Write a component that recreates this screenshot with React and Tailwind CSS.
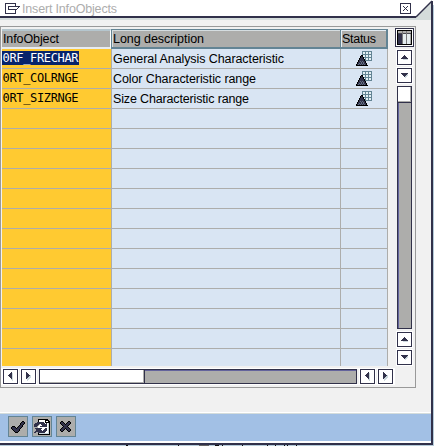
import React from "react";

const rows = [
  { name: "0RF_FRECHAR", description: "General Analysis Characteristic", width: 171 },
  { name: "0RT_COLRNGE", description: "Color Characteristic range", width: 143 },
  { name: "0RT_SIZRNGE", description: "Size Characteristic range", width: 136 },
];

const emptyRows = Array.from({ length: 13 });

const palette = {
  k: "#000000",
  n: "#31314a",
  g: "#adadab",
  w: "#ffffff",
  s: "#ccd8dd",
  m: "#637080",
};

// small bitmap icon, one character per pixel
const PixelIcon = ({ map, className }) => (
  <svg
    className={className}
    width={map[0].length}
    height={map.length}
    viewBox={`0 0 ${map[0].length} ${map.length}`}
    shapeRendering="crispEdges"
  >
    {map.map((line, y) =>
      line.split("").map((c, x) =>
        palette[c] ? <rect key={`${x}-${y}`} x={x} y={y} width="1" height="1" fill={palette[c]} /> : null
      )
    )}
  </svg>
);

const arrows = {
  up: ["...n...", "..nnn..", ".nnnnn.", "nnnnnnn", "..sssss"],
  down: ["nnnnnnn", ".nnnnns", "..nnnss", "...nss.", "....s.."],
  left: ["...n.", "..nns", ".nnns", "nnnns", ".nnns", "..nns", "...ns", "...ss", "....s"],
  right: ["n....", "nn...", "nnn..", "nnnns", "nnnss", "nnsss", "nsss.", ".ss..", ".s..."],
};

const pyramid = [
  ".....kk.....",
  "....knk.....",
  "....knnk....",
  "...knnnk....",
  "...knnnnk...",
  "..knnnnnk...",
  "..knmnmnnk..",
  ".knnnmnmnk..",
  ".knmnmnmnnk.",
  "knmnmnmnmnk.",
  "kkkkkkkkkkkk",
];

const checkIcon = [
  "...........kk.",
  "..........knnk",
  ".........knnnk",
  ".........knnk.",
  "........knnk..",
  ".kkk...knnnk..",
  "knnnk.knnnk...",
  "knnnnknnnk....",
  ".knnnnnnk.....",
  "..knnnnnk.....",
  "...knnnk......",
  "....kkk.......",
];

const refreshIcon = [
  "....kkkkkkkkkk..",
  "....kwwwwwwkkkk.",
  "....kwwwwwwkwwkk",
  "...nnnnnnnwkkkkk",
  ".nnnnnnnnnnwnwsk",
  "nnnnn.wnnnnnnwsk",
  "nnnn.wwwnnnnnwsk",
  "nnn.wwnnnnnnnwsk",
  "....wwwwwwwwwwsk",
  ".nnnnnnnwwwnnwsk",
  "..nnnnnwwwnnnwsk",
  "..nnnnnnwnnnnwsk",
  ".nnnnnnnnnnnwwsk",
  "nn..nnnnnnnwwwsk",
  "....kssssssssssk",
  "....kkkkkkkkkkkk",
];

const cancelIcon = [
  ".kk.....kk..",
  "knnk...knnk.",
  "knnnk.knnnk.",
  ".knnnknnnk..",
  "..knnnnnk...",
  "...knnnk....",
  "..knnnnnk...",
  ".knnnknnnk..",
  "knnnk.knnnk.",
  "knnk...knnk.",
  ".kk.....kk..",
];

const StatusIcon = () => (
  <svg width="16" height="15" viewBox="0 0 16 15" shapeRendering="crispEdges">
    <path d="M6 0h10v10h-10z" fill="#e4f0f5" />
    <path
      d="M6 0h10v1h-10zM6 3h10v1h-10zM6 6h10v1h-10zM6 9h10v1h-10zM6 0h1v10h-1zM9 0h1v10h-1zM12 0h1v10h-1zM15 0h1v10h-1z"
      fill="#638494"
    />
    <g transform="translate(0 4)">
      {pyramid.map((line, y) =>
        line.split("").map((c, x) =>
          palette[c] ? <rect key={`${x}-${y}`} x={x} y={y} width="1" height="1" fill={palette[c]} /> : null
        )
      )}
    </g>
  </svg>
);

const ScrollButton = ({ dir }) => (
  <button className="flex h-[15px] w-[15px] shrink-0 items-center justify-center border border-[#31314a] bg-white outline outline-1 outline-white">
    <PixelIcon map={arrows[dir]} />
  </button>
);

const Label = ({ width, className = "fill-black", children }) => (
  <svg width={width} height="16" className="block shrink-0 overflow-visible">
    <text
      x="0"
      y="12"
      textLength={width}
      className={`font-['Liberation_Sans',Arial,sans-serif] text-[12.5px] ${className}`}
    >
      {children}
    </text>
  </svg>
);

const TitleBar = () => (
  <div className="flex h-5 w-[434px] shrink-0 bg-white">
    <div className="h-5 w-[416px] border-b-2 border-[#d4dcdb]">
      <div className="flex h-[18px] items-start justify-between border-b-2 border-[#31314a]">
        <div className="flex items-start pl-[5px]">
          <svg width="15" height="16" viewBox="0 0 15 16" shapeRendering="crispEdges" className="shrink-0">
            <path
              d="M11 3.5H0.5v10H11M10.5 3v3M10.5 11v3M3 6.5h12M3 9.5h8M3.5 6v4M14.5 6v1M13.5 7v1M12.5 8v1M11.5 9v1M10.5 9v2"
              fill="none"
              stroke="#31314a"
            />
          </svg>
          <div className="ml-[2px] mt-px">
            <Label width={95} className="fill-[#adadad]">
              Insert InfoObjects
            </Label>
          </div>
        </div>
        <button className="mr-[5px] mt-[3px] flex h-[11px] w-[11px] items-center justify-center border border-[#31314a]">
          <svg width="5" height="5" viewBox="0 0 5 5" shapeRendering="crispEdges">
            <path
              d="M0 0h1v1h-1zM1 1h1v1h-1zM2 2h1v1h-1zM3 3h1v1h-1zM4 4h1v1h-1zM4 0h1v1h-1zM3 1h1v1h-1zM1 3h1v1h-1zM0 4h1v1h-1z"
              fill="#31314a"
            />
          </svg>
        </button>
      </div>
    </div>
    <svg width="18" height="20" viewBox="0 0 18 20">
      <path d="M0 17L16 1V20H0z" fill="#d4dcdb" />
      <path d="M0 17L16 1" stroke="#31314a" strokeWidth="1.5" />
      <path d="M15 1h2v19h-2z" fill="#31314a" />
      <path d="M17 5h1v15h-1z" fill="#b5cbd9" />
    </svg>
  </div>
);

const InfoTable = () => (
  <div className="w-[386px]">
    <div className="flex h-5">
      <div className="flex h-5 w-[109px] items-start border-b-2 border-r border-t-2 border-b-[#e8ecf0] border-r-white border-t-[#b5c6ce] bg-[#adadab] pl-px">
        <Label width={56}>InfoObject</Label>
      </div>
      <div className="flex h-5 w-[229px] items-start border-b-2 border-l border-t border-[#638494] bg-[#adadab] pl-px pt-px shadow-[inset_1px_1px_0_#d5dde0]">
        <Label width={91}>Long description</Label>
      </div>
      <div className="flex h-5 w-12 items-start border-b-2 border-l border-r-2 border-t border-[#638494] bg-[#adadab] pl-px pt-px shadow-[inset_1px_1px_0_#e5eef5]">
        <Label width={34}>Status</Label>
      </div>
    </div>
    {rows.map((row, i) => (
      <div key={row.name} className="flex h-5">
        <div className="flex h-5 w-[110px] items-start border-b border-r border-[#adadab] bg-[#ffca31] pt-[2px]">
          <div className={`h-[14px] w-[77px] ${i === 0 ? "bg-[#08246b] text-white" : "text-black"}`}>
            <svg width="77" height="14" className="block">
              <text
                x="0.5"
                y="11"
                textLength="76"
                fill="currentColor"
                className="font-['DejaVu_Sans_Mono',monospace] text-[12px]"
              >
                {row.name}
              </text>
            </svg>
          </div>
        </div>
        <div className="flex h-5 w-[229px] items-start border-b border-r border-[#adadab] bg-[#d9e5f3] pl-px pt-[2px]">
          <Label width={row.width}>{row.description}</Label>
        </div>
        <div className="flex h-5 w-[47px] items-start border-b border-r border-[#adadab] bg-[#d9e5f3] pl-[15px] pt-[2px]">
          <StatusIcon />
        </div>
      </div>
    ))}
    {emptyRows.map((_, i) => (
      <div key={i} className={i === 12 ? "flex h-[17px]" : "flex h-5"}>
        <div className={`w-[110px] border-r border-[#adadab] bg-[#ffca31] ${i === 12 ? "" : "border-b"}`} />
        <div className={`w-[229px] border-r border-[#adadab] bg-[#d9e5f3] ${i === 12 ? "" : "border-b"}`} />
        <div className={`w-[47px] border-r border-[#adadab] bg-[#d9e5f3] ${i === 12 ? "" : "border-b"}`} />
      </div>
    ))}
  </div>
);

const VerticalScroll = () => (
  <div className="flex w-[17px] flex-col items-center">
    <button className="mb-[3px] flex h-[19px] w-[19px] shrink-0 items-center justify-center border border-[#31314a] bg-white">
      <svg width="15" height="15" viewBox="0 0 15 15" shapeRendering="crispEdges">
        <path d="M0 0h15v15H0z" fill="#000" />
        <path d="M1 1h13v13H1z" fill="#adadab" />
        <path d="M1 3h13v1H1z" fill="#4a4a52" />
        <path d="M1 4h4v10H1z" fill="#31314a" />
        <path d="M6 4h3v10H6zM10 4h3v10h-3z" fill="#e4ecef" />
        <path d="M9 1h1v13H9zM5 1h1v13H5z" fill="#77777a" />
      </svg>
    </button>
    <ScrollButton dir="up" />
    <div className="h-[3px] shrink-0" />
    <ScrollButton dir="down" />
    <div className="mb-[3px] mt-[3px] h-[243px] w-[15px] border border-[#31314a] bg-[#adadab] shadow-[inset_1px_0_0_#63639c]">
      <div className="h-4 border-b border-[#31314a] bg-white shadow-[inset_-1px_-1px_0_#adadab]" />
    </div>
    <ScrollButton dir="up" />
    <div className="h-[3px] shrink-0" />
    <ScrollButton dir="down" />
  </div>
);

const HorizontalScroll = () => (
  <div className="mt-[2px] flex h-[15px] w-[392px] gap-[3px] pl-px outline outline-1 outline-white">
    <ScrollButton dir="left" />
    <ScrollButton dir="right" />
    <div className="h-[15px] w-[318px] shrink-0 border border-[#31314a] bg-[#adadab] shadow-[inset_0_1px_0_#63639c]">
      <div className="h-[13px] w-[105px] border-r border-[#31314a] bg-white shadow-[inset_-1px_-1px_0_#adadab]" />
    </div>
    <ScrollButton dir="left" />
    <ScrollButton dir="right" />
  </div>
);

const Toolbar = () => (
  <div className="flex h-[31px] gap-1 border-b-2 border-t border-white bg-[#a2c0e5] pl-2 pt-[3px] shadow-[inset_0_1px_0_#d4dcdb]">
    {[checkIcon, refreshIcon, cancelIcon].map((icon, i) => (
      <button key={i} className="flex h-[21px] w-5 items-center justify-center border border-[#638494] bg-[#adadab]">
        <PixelIcon map={icon} />
      </button>
    ))}
  </div>
);

const App = () => {
  return (
    <div className="flex h-[446px] w-[434px] flex-col overflow-hidden bg-[#b5cbd9]">
      <TitleBar />
      <div className="h-[425px] w-[433px] border-b-2 border-r-2 border-[#31314a] bg-[#f1f1f1]">
        <div className="flex h-[392px] items-start pt-[6px]">
          <div className="h-[362px] w-[416px] border border-[#999] pl-px">
            <div className="flex h-[340px] pt-px">
              <div className="pt-px">
                <InfoTable />
              </div>
              <div className="ml-2">
                <VerticalScroll />
              </div>
            </div>
            <HorizontalScroll />
          </div>
        </div>
        <Toolbar />
      </div>
      <svg width="434" height="1" shapeRendering="crispEdges" className="shrink-0">
        <path
          d="M126 0h2v1h-2zM178 0h1v1h-1zM215 0h4v1h-4zM222 0h1v1h-1zM242 0h1v1h-1zM267 0h1v1h-1zM275 0h1v1h-1zM284 0h1v1h-1zM287 0h1v1h-1zM296 0h1v1h-1z"
          fill="#111"
        />
        <path d="M199 0h10v1h-10z" fill="#666" />
      </svg>
    </div>
  );
};

export default App;
